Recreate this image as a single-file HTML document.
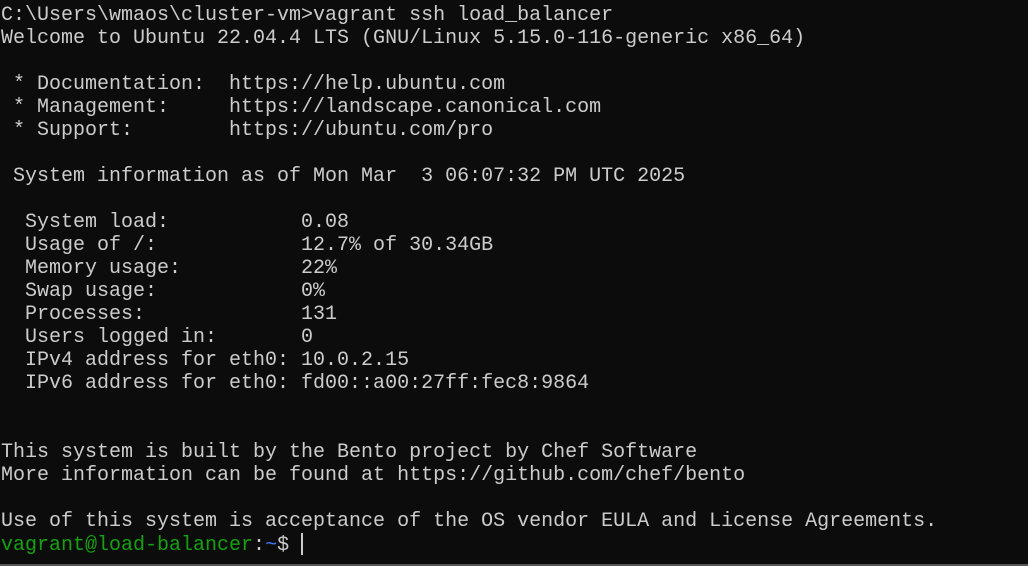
<!DOCTYPE html><html><head><style>
body{margin:0;background:#0c0c0c;width:1028px;height:566px;overflow:hidden;position:relative}
pre{margin:0;position:absolute;left:1px;top:4px;font:20px/23px "Liberation Mono",monospace;color:#cccccc}
.g{color:#13a10e}.b{color:#3b78ff}
.c{display:inline-block;width:2px;height:22px;background:#ccc;vertical-align:-5px;margin-left:12px}
.bar{position:absolute;left:0;bottom:0;width:1028px;height:2px;background:#555}
</style></head><body><pre>C:\Users\wmaos\cluster-vm>vagrant ssh load_balancer
Welcome to Ubuntu 22.04.4 LTS (GNU/Linux 5.15.0-116-generic x86_64)

 * Documentation:  https://help.ubuntu.com
 * Management:     https://landscape.canonical.com
 * Support:        https://ubuntu.com/pro

 System information as of Mon Mar  3 06:07:32 PM UTC 2025

  System load:           0.08
  Usage of /:            12.7% of 30.34GB
  Memory usage:          22%
  Swap usage:            0%
  Processes:             131
  Users logged in:       0
  IPv4 address for eth0: 10.0.2.15
  IPv6 address for eth0: fd00::a00:27ff:fec8:9864


This system is built by the Bento project by Chef Software
More information can be found at https://github.com/chef/bento

Use of this system is acceptance of the OS vendor EULA and License Agreements.
<span class="g">vagrant@load-balancer</span>:<span class="b">~</span>$<span class="c"></span></pre><div class="bar"></div></body></html>
